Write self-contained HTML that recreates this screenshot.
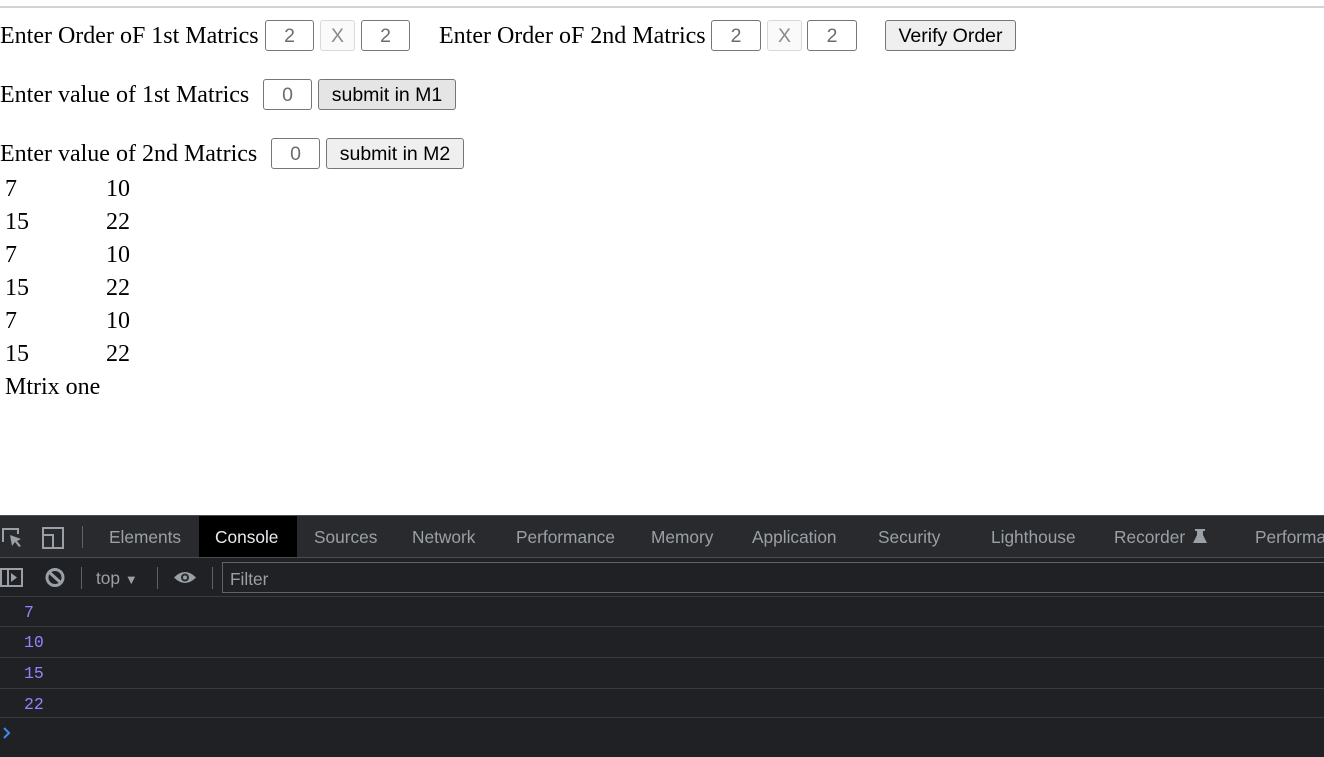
<!DOCTYPE html>
<html><head><style>
*{margin:0;padding:0;box-sizing:border-box}
body{width:1324px;height:757px;background:#fff;position:relative;overflow:hidden;font-family:"Liberation Serif",serif;}
.t{position:absolute;font-size:24px;color:#000;white-space:nowrap;line-height:26px}
.in{position:absolute;height:31px;border:1px solid #767676;border-radius:3px;font-family:"Liberation Sans",sans-serif;font-size:19.5px;color:#6d6d6d;text-align:center;line-height:31px;background:#fff}
.dis{border-color:#d8d8d8;background:#fafafa;color:#8a8a8a}
.btn{position:absolute;height:31px;border:1px solid #767676;border-radius:3px;background:#efefef;font-family:"Liberation Sans",sans-serif;font-size:19.5px;color:#000;text-align:center;line-height:31px}
.dt{position:absolute;font-family:"Liberation Sans","DejaVu Sans",sans-serif;color:#9aa0a6;font-size:17.3px;white-space:nowrap}
.num{position:absolute;left:24px;font-family:"Liberation Mono","DejaVu Sans Mono",monospace;color:#9980ff;font-size:16.5px}
.sep{position:absolute;left:0;width:1324px;height:1px;background:#3a3b3e}
</style></head><body>
<div style="position:absolute;left:0;top:6px;width:1324px;height:2px;background:#d3d3d3"></div>

<div class="t" style="left:0;top:23px">Enter Order oF 1st Matrics</div>
<div class="in" style="left:265px;top:20px;width:49px">2</div>
<div class="in dis" style="left:320px;top:20px;width:35px">X</div>
<div class="in" style="left:361px;top:20px;width:49px">2</div>
<div class="t" style="left:439px;top:23px">Enter Order oF 2nd Matrics</div>
<div class="in" style="left:711px;top:20px;width:50px">2</div>
<div class="in dis" style="left:767px;top:20px;width:35px">X</div>
<div class="in" style="left:807px;top:20px;width:50px">2</div>
<div class="btn" style="left:885px;top:20px;width:131px">Verify Order</div>

<div class="t" style="left:0;top:82px">Enter value of 1st Matrics</div>
<div class="in" style="left:263px;top:79px;width:49px">0</div>
<div class="btn" style="left:318px;top:79px;width:138px;background:#e5e5e5">submit in M1</div>

<div class="t" style="left:0;top:141px">Enter value of 2nd Matrics</div>
<div class="in" style="left:271px;top:138px;width:49px">0</div>
<div class="btn" style="left:326px;top:138px;width:138px">submit in M2</div>

<div class="t" style="left:5px;top:176px">7</div><div class="t" style="left:106px;top:176px">10</div>
<div class="t" style="left:5px;top:209px">15</div><div class="t" style="left:106px;top:209px">22</div>
<div class="t" style="left:5px;top:242px">7</div><div class="t" style="left:106px;top:242px">10</div>
<div class="t" style="left:5px;top:275px">15</div><div class="t" style="left:106px;top:275px">22</div>
<div class="t" style="left:5px;top:308px">7</div><div class="t" style="left:106px;top:308px">10</div>
<div class="t" style="left:5px;top:341px">15</div><div class="t" style="left:106px;top:341px">22</div>
<div class="t" style="left:5px;top:374px">Mtrix one</div>

<!-- devtools -->
<div style="position:absolute;left:0;top:515px;width:1324px;height:242px;background:#202124"></div>
<div style="position:absolute;left:0;top:515px;width:1324px;height:42px;background:#292a2d;border-top:1px solid #494c50"></div>
<div style="position:absolute;left:199px;top:516px;width:98px;height:41px;background:#000"></div>
<svg style="position:absolute;left:0;top:525px" width="70" height="26" viewBox="0 0 70 26">
<path d="M3 17V4h15v5" fill="none" stroke="#9aa0a6" stroke-width="2"/>
<path d="M10 10l11 4-4 2 4 5-2 1-4-5-3 4z" fill="#9aa0a6"/>
<rect x="43" y="3" width="20" height="20" fill="none" stroke="#9aa0a6" stroke-width="2"/>
<rect x="43" y="10" width="10" height="13" fill="#292a2d" stroke="#9aa0a6" stroke-width="2"/>
</svg>
<div style="position:absolute;left:82px;top:526px;width:1px;height:22px;background:#5f6368"></div>
<div class="dt" style="left:109px;top:527px">Elements</div>
<div class="dt" style="left:215px;top:527px;color:#e8eaed">Console</div>
<div class="dt" style="left:314px;top:527px">Sources</div>
<div class="dt" style="left:412px;top:527px">Network</div>
<div class="dt" style="left:516px;top:527px">Performance</div>
<div class="dt" style="left:651px;top:527px">Memory</div>
<div class="dt" style="left:752px;top:527px">Application</div>
<div class="dt" style="left:878px;top:527px">Security</div>
<div class="dt" style="left:991px;top:527px">Lighthouse</div>
<div class="dt" style="left:1114px;top:527px">Recorder</div>
<svg style="position:absolute;left:1192px;top:528px" width="16" height="16"><path d="M3 1h10v2h-2v4l4 8H1l4-8V3H3z" fill="#9aa0a6"/></svg>
<div class="dt" style="left:1255px;top:527px">Performa</div>
<div class="sep" style="top:557px;background:#494c50"></div>

<svg style="position:absolute;left:0;top:565px" width="210" height="26">
<rect x="1" y="4" width="21" height="17" fill="none" stroke="#9aa0a6" stroke-width="2"/>
<line x1="8" y1="4" x2="8" y2="21" stroke="#9aa0a6" stroke-width="2"/>
<path d="M11 8l6 4.5-6 4.5z" fill="#9aa0a6"/>
<circle cx="55" cy="12.5" r="8" fill="none" stroke="#9aa0a6" stroke-width="3"/>
<line x1="49" y1="7" x2="61" y2="18" stroke="#9aa0a6" stroke-width="3"/>
<path d="M174 12.5q11-11 22 0q-11 11-22 0z" fill="#9aa0a6"/>
<circle cx="185" cy="12.5" r="4" fill="#292a2d"/><circle cx="185" cy="12.5" r="2" fill="#9aa0a6"/>
</svg>
<div style="position:absolute;left:81px;top:567px;width:1px;height:22px;background:#5f6368"></div>
<div class="dt" style="left:96px;top:568px">top <span style="font-size:13px">▼</span></div>
<div style="position:absolute;left:157px;top:567px;width:1px;height:22px;background:#5f6368"></div>
<div style="position:absolute;left:212px;top:567px;width:1px;height:22px;background:#5f6368"></div>
<div style="position:absolute;left:222px;top:562px;width:1110px;height:31px;border:1px solid #5f6368;background:#202124"></div>
<div class="dt" style="left:230px;top:569px">Filter</div>

<div class="sep" style="top:596px"></div>
<div class="num" style="top:603px">7</div>
<div class="sep" style="top:626px"></div>
<div class="num" style="top:633px">10</div>
<div class="sep" style="top:657px"></div>
<div class="num" style="top:664px">15</div>
<div class="sep" style="top:688px"></div>
<div class="num" style="top:695px">22</div>
<div class="sep" style="top:717px"></div>
<svg style="position:absolute;left:2px;top:726px" width="10" height="14"><path d="M2 2l5 5-5 5" fill="none" stroke="#3c8cf0" stroke-width="2"/></svg>
</body></html>
